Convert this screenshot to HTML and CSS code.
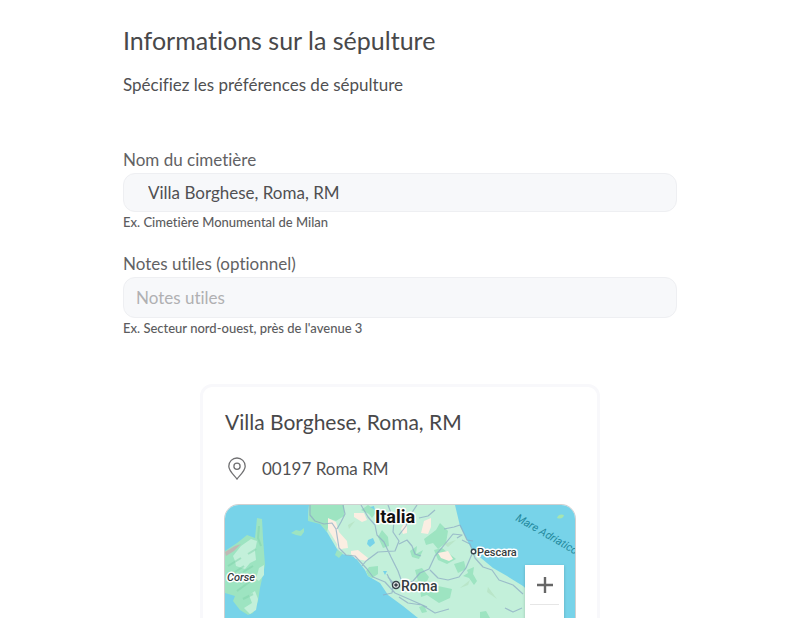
FILE: index.html
```html
<!DOCTYPE html>
<html lang="fr">
<head>
<meta charset="utf-8">
<meta name="viewport" content="width=device-width, initial-scale=1">
<title>Informations sur la sépulture</title>
<link rel="stylesheet" href="styles.css">
</head>
<body>
<main class="page">
  <h1 class="title">Informations sur la sépulture</h1>
  <p class="intro">Spécifiez les préférences de sépulture</p>
  <form class="form">
    <div class="field">
      <label for="cemetery">Nom du cimetière</label>
      <input class="input input-search" id="cemetery" type="text" value="Villa Borghese, Roma, RM" aria-describedby="cemetery-hint">
      <small id="cemetery-hint">Ex. Cimetière Monumental de Milan</small>
    </div>
    <div class="field">
      <label for="notes">Notes utiles (optionnel)</label>
      <input class="input input-notes" id="notes" type="text" placeholder="Notes utiles" aria-describedby="notes-hint">
      <small id="notes-hint">Ex. Secteur nord-ouest, près de l'avenue 3</small>
    </div>
  </form>
  <section class="card">
    <h2 class="card-title">Villa Borghese, Roma, RM</h2>
    <p class="address">
      <svg class="pin" viewBox="0 0 24 24" aria-hidden="true"><path d="M12 22C9.500 18.500 3.800 14 3.800 9.200a8.200 8.200 0 0 1 16.400 0C20.200 14 14.500 18.500 12 22z"/><circle cx="12" cy="9.200" r="3.100"/></svg>
      <span>00197 Roma RM</span>
    </p>
    <div class="map">
      <svg class="map-drawing" viewBox="0 0 350 200" preserveAspectRatio="xMidYMin slice">
        <rect width="350" height="200" fill="#77d3e9"/>
        <path fill="#9de4c1" d="M32 13l5 1 1 19 2 27-5 23-2 13-5 12-5 2-8-5-7-9 2-5-10-3V46l12-8 10-8 8 3z"/>
        <path fill="#c3f0da" d="M8 51l8-10 10-7 6 2-2 10 1 9-6 3-5 6-9-3-1-5zM34 63l5-3v10l-5 6-3-2zM24 90l6-4 3 8-2 11-6 4-6-6 8-5z"/>
        <path fill="#bfb9b5" d="M0 47l10-6 6-2-7 7-8 5z"/>
        <path fill="none" stroke="#7fd2aa" stroke-width="2" opacity=".5" d="M3 61l13-8m-9 16l12-8m4-12l8-5m-13 23l10-6M15 78l13-8m-16 16l15-11m-9 19l10-5m6-68l-1 12 3 8"/>
        <path fill="#9de4c1" d="M66 28l5-3 4 1 4-3v4l-3 4-5-1z"/>
        <path fill="#c3f0da" d="M84 0h146l5 21 10 20 5 7 18 15 14 8 16 10 52 48v71H250L193 113l-15-12-15-11-8-12-12-7-3-6-10-13-13-3-5-5-10-17-7-9-12-3z"/>
        <path fill="#9de4c1" d="M84 0h35v11l-8 5-6-2-3 13-7-8-12-3zM141 66l3-4 9-1v8l-6 4-4-2zM112 45l6 3-4 5-4-3zM211 25l4-7 8 8-2 12-8 6-5-6-7 2-2-6zM190 65l7-2 7 9-3 6-8-2zM195 84l18-3 14 3-2 9-11 5-12-8-6 2zM136 5l7-5 9 6-5 7-3-4zM157 25l6 7 1 9-6 2-5-11zM185 46l7-5-1 8 7-4-4 9-7-2zM209 45l8-2 14 11-9 5-9-4zM194 102l5-2 3 7-5 1zM242 65l7-3-1 7 4 7-3 4-5-7-6-2 5-3zM255 107l6-1 4 7h-10zM229 59l10-3 2 8-8 4z"/>
        <path fill="#fbeee2" d="M103 13l8 4 3 10 8 9 1 7-8 1-12-20zM129 8l10 0 3 7-5 2-8-5zM126 46l7-1 10 8-1 3-11-2-5-5zM113 36l7 2 2 4-7 3-3-3zM199 16l7-3v9l-3 7-7-1zM178 20l4-1v9l-4 1-2-5zM213 48l10-2 5 8-4 2-8-3z"/>
        <path fill="#77d3e9" d="M143 35l5-2 2 5-5 4-3-3zM158 66l4 0-2 4zM145 2l4-1 1 4z"/>
        <g fill="none" stroke="#8dabc4" stroke-width="1.200" stroke-linejoin="round" opacity=".75">
          <path d="M85 0v10l5 6 9 3 8-1 4 6 3 19 7 7 9 1 12 13 6 8 12 5 10 11 16 7 16 7M118 0l2 9-4 8-4 7M136 0l7 12 7 8 2 10 7 7 7 15 7 14 5 14-2 6M163 0l6 16-1 11 6 9-4 10-17 1-12 9-4 5M174 39l8-4 5 6 3 8 6 2M192 0l-8 12-3 9-7 9M210 5l-7 6-9 2M219 24l10-2 6-2M232 33l5-3-9-1-8 10-10 12-6 13-9 4-7 8-8 3M205 65l8 8 10 2 11-3 7-9 6-14M237 35l8 4 5 14 8 9 9 3 7 10 14 5 10 9M163 72l7 8 6 2 9-4 8 4M162 69l6 12-1 7-9 2M174 92l9 6 14 2 13 8 14-4M280 103l8 4 9-4M235 20l7 15 6 1"/>
        </g>
        <path fill="#b0dcb7" opacity=".5" d="M235 83l10-8-2 5zM263 82l9 12-10-7zM186 79l8-5-1 4zM219 39l12-4-8 7zM123 20l7-4-6 8z"/>
        <path fill="#a5e5b0" d="M332 13c1-4 5-4 7-3-1 4-4 4-7 3z"/>
        <g class="map-labels">
          <text class="label-country" x="150" y="18">Italia</text>
          <text class="label-region" x="2" y="76">Corse</text>
          <text class="label-city" x="176" y="86">Roma</text>
          <text class="label-town" x="252" y="51">Pescara</text>
        </g>
        <text class="label-sea" transform="translate(290 15) rotate(30)">Mare Adriatico</text>
        <circle cx="171" cy="80" r="3.500" fill="#fff" stroke="#37434a" stroke-width="1.500"/><circle cx="171" cy="80" r="1.800" fill="#37434a"/>
        <circle cx="248.500" cy="46.500" r="2.200" fill="#fff" stroke="#37434a" stroke-width="1.400"/>
      </svg>
      <div class="zoom-controls">
        <button type="button" aria-label="Zoom avant"><svg viewBox="0 0 18 18" aria-hidden="true"><path d="M9 1v16M1 9h16"/></svg></button>
        <button type="button" aria-label="Zoom arrière"><svg viewBox="0 0 18 18" aria-hidden="true"><path d="M1 9h16"/></svg></button>
      </div>
    </div>
  </section>
</main>
</body>
</html>
```
FILE: styles.css
```css
* { box-sizing: border-box; }

body {
  margin: 0;
  background: #fff;
  color: #505052;
  font-family: Lato, "Open Sans", sans-serif;
  font-variant-ligatures: none;
}

.page {
  height: 100vh;
  overflow: hidden;
  padding: 24px 127px 0 123px;
}

h1, h2, p { margin: 0; font-weight: 400; }

.title { font-size: 25px; line-height: 32px; color: #48484a; }
.intro { margin-top: 17px; font-size: 17px; line-height: 24px; }

.form {
  display: flex;
  flex-direction: column;
  gap: 21px;
  margin-top: 51px;
}

.field { display: flex; flex-direction: column; }
.field label { font-size: 17px; line-height: 24px; color: #626264; }

.input {
  width: 100%;
  border: 1px solid #eeeff2;
  margin-top: 1px;
  border-radius: 12px;
  background: #f7f8fa;
  color: #505052;
  font: inherit;
  font-size: 17px;
}
.input-search { height: 39px; padding: 0 24px; }
.input-notes { height: 41px; padding: 0 12px; }
.input::placeholder { color: #b0b0b2; opacity: 1; }

.field small {
  margin-top: 1px;
  font-size: 13px;
  line-height: 18px;
  font-weight: 500;
  color: #5c5c5e;
}

.card {
  max-width: 400px;
  margin: 47px auto 0;
  padding: 21px 22px;
  border: 3px solid #f8f8fb;
  border-radius: 12px;
}
.card-title { font-size: 21px; line-height: 28px; color: #48484a; }

.address {
  display: flex;
  align-items: center;
  gap: 13px;
  margin-top: 21px;
  font-size: 17px;
  line-height: 24px;
}
.pin {
  width: 24px;
  height: 24px;
  fill: none;
  stroke: #707072;
  stroke-width: 1.3;
}

.map {
  position: relative;
  margin-top: 24px;
  border-radius: 14px;
  overflow: hidden;
  box-shadow: 0 0 0 1px #d0d0d0;
}
.map-drawing { display: block; width: 100%; }
.map-labels {
  fill: #343c40;
  stroke: #fff;
  stroke-width: 3px;
  stroke-linejoin: round;
  paint-order: stroke;
  font-family: Roboto, sans-serif;
}
.label-country { font-size: 18px; font-weight: 700; fill: #111; }
.label-region { font-size: 11px; font-style: italic; font-weight: 500; }
.label-city { font-size: 14px; font-weight: 500; }
.label-town { font-size: 11px; font-weight: 500; }
.label-sea { font: italic 400 11px Roboto, sans-serif; fill: #258a9e; }

.zoom-controls {
  position: absolute;
  top: 60px;
  right: 11px;
  width: 39px;
  background: #fff;
  box-shadow: 0 1px 3px #0003;
}
.zoom-controls button {
  display: grid;
  place-items: center;
  width: 100%;
  height: 39px;
  padding: 0;
  border: 0;
  background: none;
}
.zoom-controls button + button {
  grid-template-rows: 1px 1fr;
}
.zoom-controls button + button::before {
  content: "";
  width: 29px;
  height: 1px;
  background: #e6e6e6;
}
.zoom-controls svg { width: 18px; height: 18px; stroke: #666; stroke-width: 2.4; }
```
